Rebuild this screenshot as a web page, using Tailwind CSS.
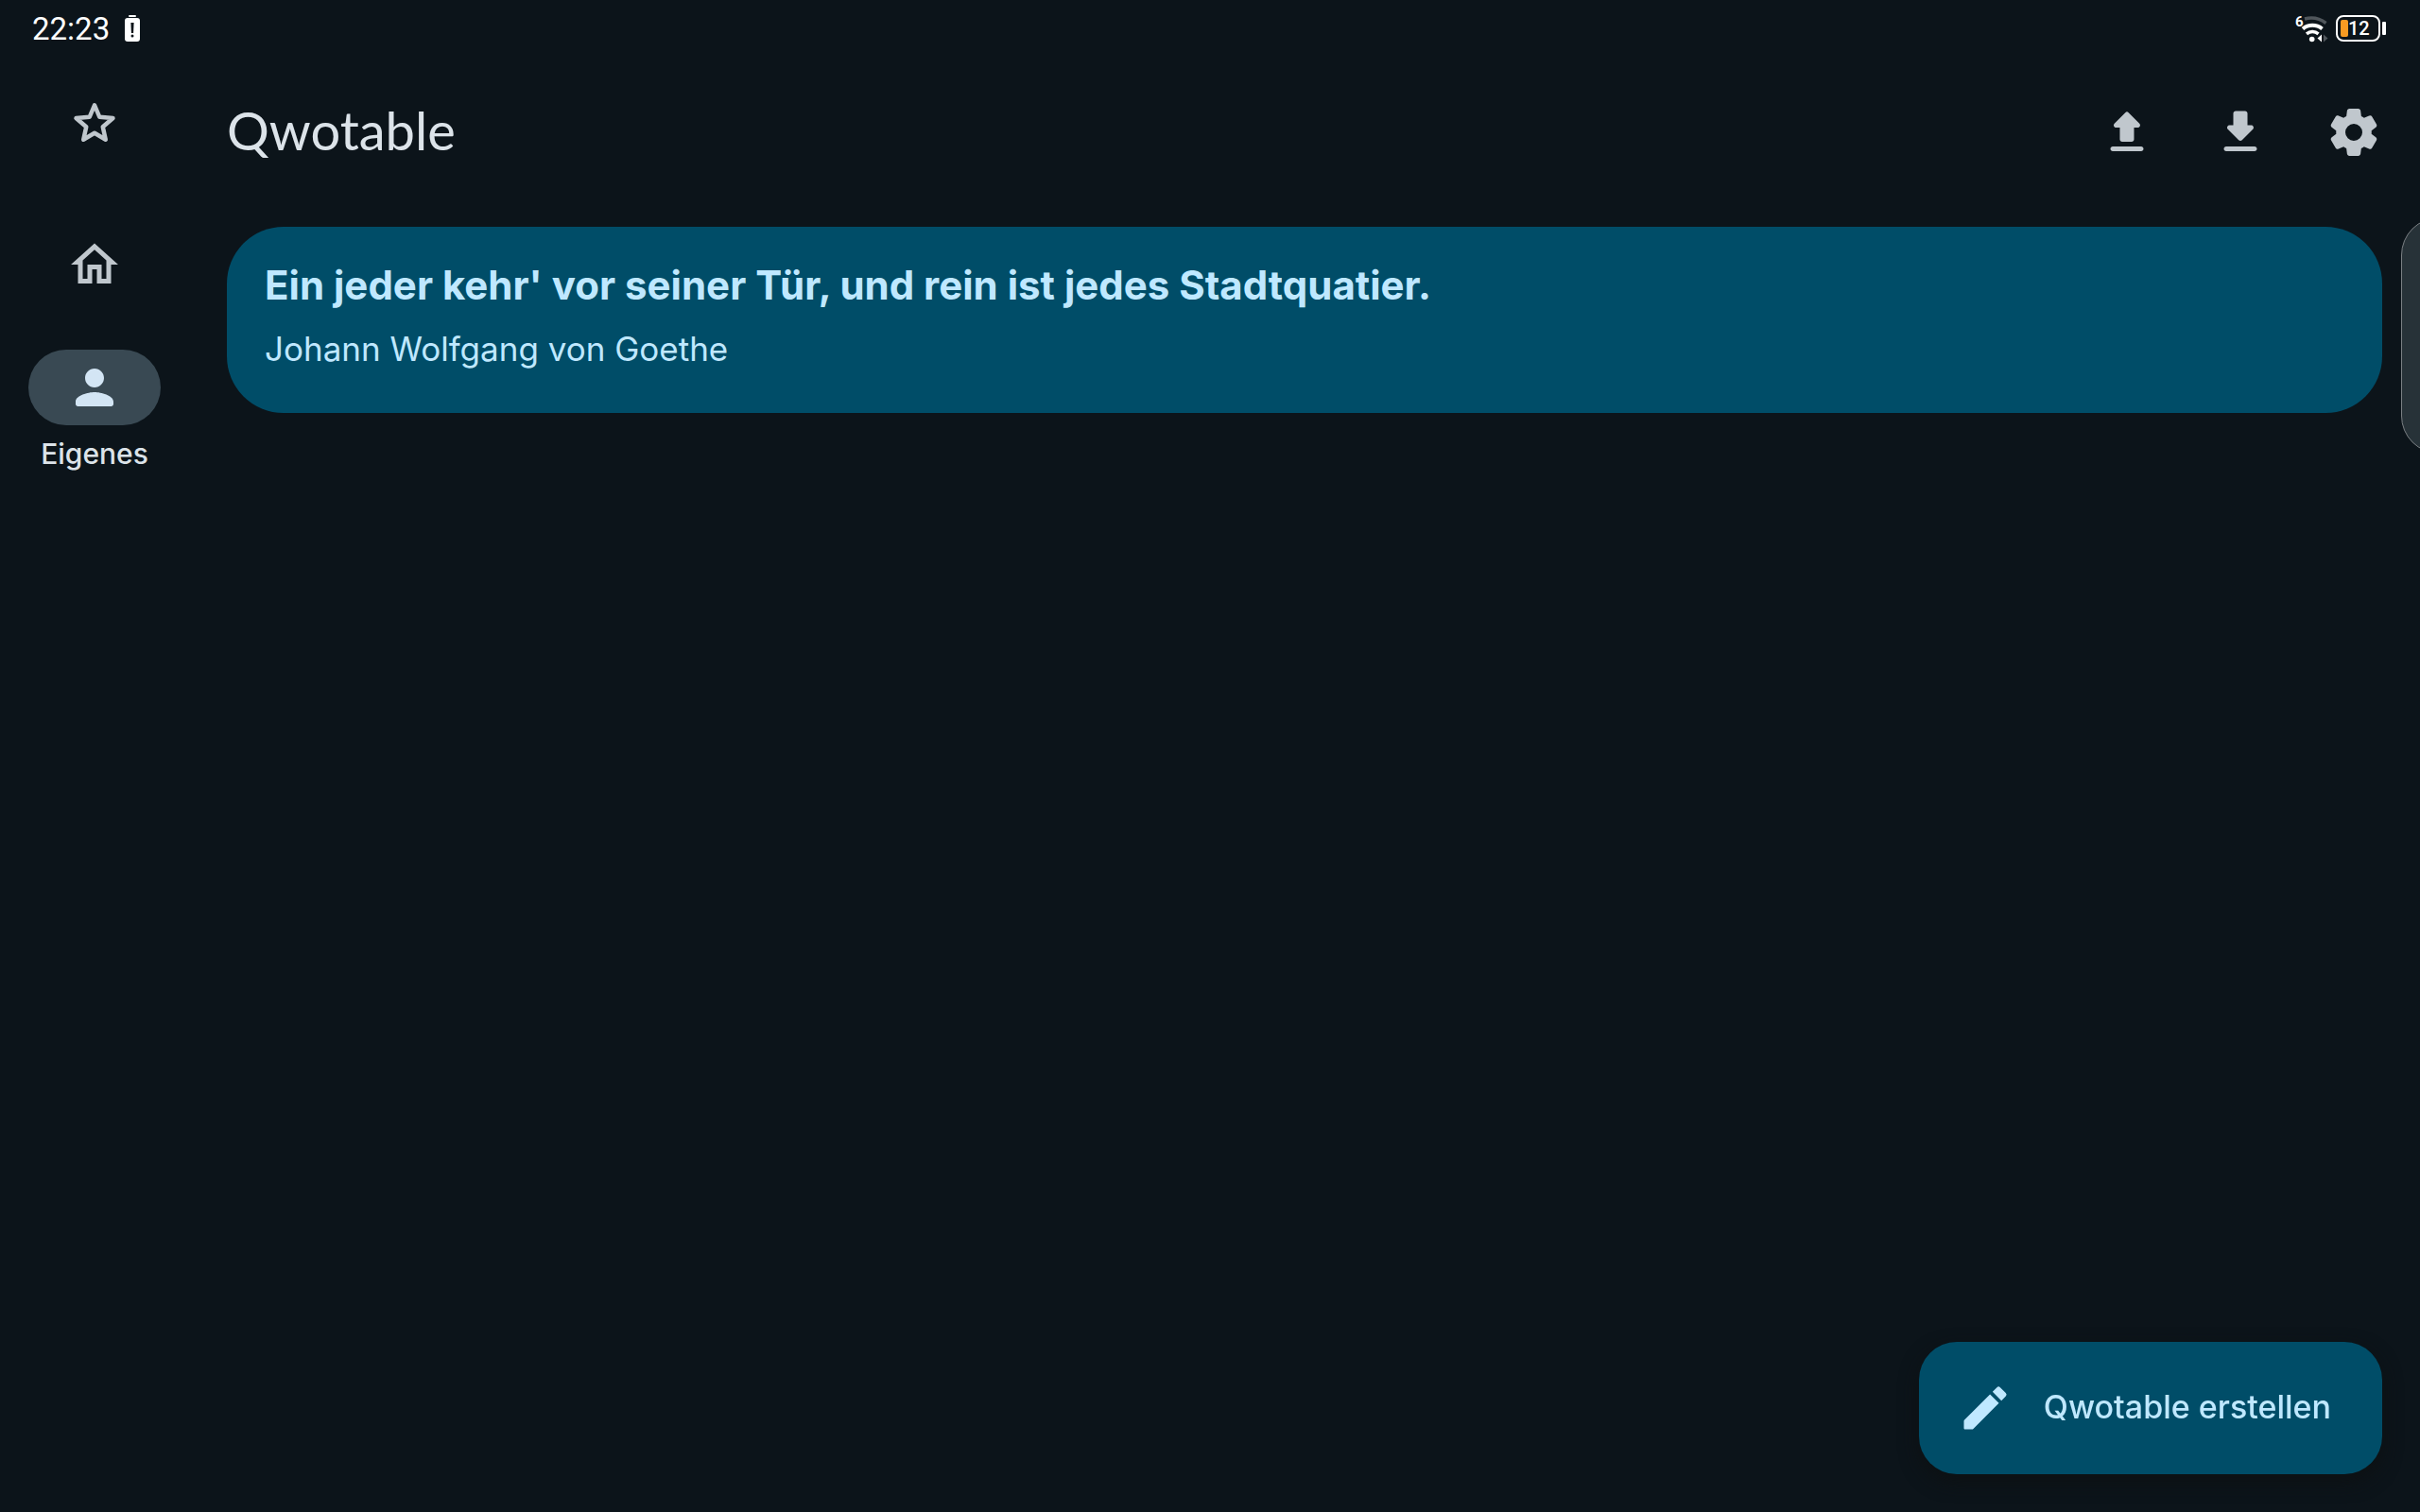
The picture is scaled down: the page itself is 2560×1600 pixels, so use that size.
<!DOCTYPE html>
<html lang="de">
<head>
<meta charset="utf-8">
<meta name="viewport" content="width=device-width, initial-scale=1">
<title>Qwotable</title>
<script src="https://cdn.jsdelivr.net/npm/@tailwindcss/browser@4"></script>
</head>
<body class="relative flex min-h-screen flex-col overflow-x-hidden bg-[#0c141a] font-['Inter',sans-serif] text-[#dce3e9]">
  <!-- Status bar -->
  <header class="flex h-15 items-center justify-between pr-9 pl-[34px] text-white">
    <div class="flex items-center gap-4">
      <time class="pt-[2px] font-['Roboto',sans-serif] text-[33px] leading-10">22:23</time>
      <svg class="h-7 w-4" viewBox="0 0 16 28" role="img" aria-label="Akku schwach">
        <rect x="4" y="0" width="8" height="2" rx="1" fill="#fff"/>
        <rect x="0" y="3" width="16" height="25" rx="3" fill="#fff"/>
        <path d="M6.400 8h3.200l-.5 11H6.900z" fill="#0c141a"/>
        <circle cx="8" cy="22" r="1.500" fill="#0c141a"/>
      </svg>
    </div>
    <div class="flex items-center gap-2">
      <svg class="h-8 w-9 overflow-visible font-['Roboto',sans-serif]" viewBox="0 0 36 32" fill="none" role="img" aria-label="WLAN 6">
        <path d="M11 6A26 26 0 0 1 33.500 10.500" stroke="#50565b" stroke-width="3.500"/>
        <path d="M9 16.500A16 16 0 0 1 29.500 16.500" stroke="#fff" stroke-width="4"/>
        <path d="M13 21.800A10 10 0 0 1 25.500 21.800" stroke="#fff" stroke-width="3.500"/>
        <circle cx="18.700" cy="27.500" r="2.800" fill="#fff"/>
        <path d="M29 22.500v8l-4.500-4z" fill="#fff"/>
        <path d="M31 22.500v8l4.500-4z" fill="#50565b"/>
        <text x="1" y="14" font-size="15" font-weight="700" fill="#fff">6</text>
      </svg>
      <div class="flex items-center gap-[2px]">
        <div class="flex h-7 w-[47px] items-center rounded-lg border-2 border-white pl-[3px]">
          <span class="h-[18px] w-2 rounded-[2px] bg-[#f99b22]"></span>
          <span class="font-['Roboto',sans-serif] text-[20px] leading-6 font-medium">12</span>
        </div>
        <span class="h-[14px] w-1 rounded-[1px] bg-white"></span>
      </div>
    </div>
  </header>

  <div class="flex flex-1">
    <!-- Navigation rail -->
    <nav class="flex w-50 flex-col items-center pt-10 text-[#c0c7cd]" aria-label="Hauptnavigation">
      <a href="#favoriten" aria-label="Favoriten" class="mb-[90px]">
        <svg class="size-15" viewBox="0 0 24 24" fill="none" stroke="currentColor" stroke-width="1.800" stroke-linejoin="round"><path d="M12 4.500 14.100 9.500 19.800 10 15.500 13.700 16.700 19.100 12 16.300 7.300 19.100 8.500 13.700 4.200 10 9.900 9.500z"/></svg>
      </a>
      <a href="#start" aria-label="Start" class="mb-15">
        <svg class="size-15" viewBox="0 0 24 24" fill="currentColor"><path d="M12 5.690l5 4.500V18h-2v-6H9v6H7v-7.810l5-4.500M12 3L2 12h3v8h6v-6h2v6h6v-8h3L12 3z"/></svg>
      </a>
      <a href="#eigenes" aria-current="page" class="flex flex-col items-center gap-[10px]">
        <span class="flex h-20 w-35 items-center justify-center rounded-full bg-[#394953] text-[#d3e5f4]">
          <svg class="size-15" viewBox="0 0 24 24" fill="currentColor"><path d="M12 12c2.210 0 4-1.790 4-4s-1.790-4-4-4-4 1.790-4 4 1.790 4 4 4zm0 2c-2.670 0-8 1.340-8 4v1c0 .55.45 1 1 1h14c.55 0 1-.45 1-1v-1c0-2.660-5.330-4-8-4z"/></svg>
        </span>
        <span class="text-[30px] leading-10 font-medium text-[#dce3e9]">Eigenes</span>
      </a>
    </nav>

    <main class="flex flex-1 flex-col pr-10 pl-10">
      <!-- App bar -->
      <div class="flex h-40 items-center justify-between">
        <h1 class="pb-1 font-['Lato',sans-serif] text-[56px] leading-[70px]">Qwotable</h1>
        <div class="flex gap-15 text-[#c0c7cd]">
          <button type="button" aria-label="Exportieren">
            <svg class="size-15" viewBox="0 0 24 24" fill="currentColor"><path d="M7.400 10h1.590v5c0 .55.45 1 1 1h4c.55 0 1-.45 1-1v-5h1.590c.89 0 1.340-1.080.71-1.710L12.700 3.700a.996.996 0 0 0-1.410 0L6.700 8.290c-.63.63-.19 1.710.7 1.710zM5 19c0 .55.45 1 1 1h12c.55 0 1-.45 1-1s-.45-1-1-1H6c-.55 0-1 .45-1 1z"/></svg>
          </button>
          <button type="button" aria-label="Importieren">
            <svg class="size-15" viewBox="0 0 24 24" fill="currentColor"><path d="M16.590 9H15V4c0-.55-.45-1-1-1h-4c-.55 0-1 .45-1 1v5H7.410c-.89 0-1.340 1.080-.71 1.710l4.590 4.590c.39.39 1.020.39 1.410 0l4.590-4.590c.63-.63.19-1.710-.7-1.710zM5 19c0 .55.45 1 1 1h12c.55 0 1-.45 1-1s-.45-1-1-1H6c-.55 0-1 .45-1 1z"/></svg>
          </button>
          <button type="button" aria-label="Einstellungen">
            <svg class="size-15" viewBox="0 0 24 24" fill="currentColor"><path d="M19.500 12c0-.23-.01-.45-.03-.68l1.860-1.410c.4-.3.51-.86.26-1.300l-1.870-3.230a.987.987 0 0 0-1.250-.42l-2.150.91c-.37-.26-.76-.49-1.170-.68l-.29-2.310c-.06-.5-.49-.88-.99-.88h-3.730c-.51 0-.94.38-1 .88l-.29 2.310c-.41.19-.8.42-1.170.68l-2.150-.91c-.46-.2-1-.02-1.250.42L2.410 8.620c-.25.44-.14.99.26 1.300l1.860 1.410a7.343 7.343 0 0 0 0 1.350l-1.860 1.410c-.4.3-.51.86-.26 1.300l1.870 3.230c.25.44.79.62 1.250.42l2.150-.91c.37.26.76.49 1.170.68l.29 2.310c.06.5.49.88.99.88h3.730c.5 0 .93-.38.99-.88l.29-2.310c.41-.19.8-.42 1.170-.68l2.150.91c.46.2 1 .02 1.250-.42l1.870-3.230c.25-.44.14-.99-.26-1.300l-1.860-1.410c.03-.23.04-.45.04-.68zM12 15.600a3.600 3.600 0 1 1 0-7.200 3.600 3.600 0 0 1 0 7.200z"/></svg>
          </button>
        </div>
      </div>

      <!-- Own quotes -->
      <article class="mt-5 rounded-[60px] bg-[#004d68] px-10 pt-8 pb-[43px] text-[#bfe8ff]">
        <blockquote class="text-[42px] leading-15 font-bold">Ein jeder kehr' vor seiner Tür, und rein ist jedes Stadtquatier.</blockquote>
        <p class="mt-3 text-[35px] leading-[50px]">Johann Wolfgang von Goethe</p>
      </article>
    </main>
  </div>

  <button type="button" class="fixed right-10 bottom-10 flex h-35 items-center gap-8 rounded-[40px] bg-[#004d68] pr-[54px] pl-10 text-[#bfe8ff] shadow-[0_8px_20px_#0d1113]">
    <svg class="size-15" viewBox="0 0 24 24" fill="currentColor"><path d="M3 17.460v3.040c0 .28.22.5.5.5h3.040c.13 0 .26-.05.35-.15L17.810 9.940l-3.750-3.750L3.150 17.100c-.1.1-.15.22-.15.36zM20.710 7.040a.996.996 0 0 0 0-1.410l-2.340-2.340a.996.996 0 0 0-1.410 0l-1.830 1.830 3.750 3.750 1.830-1.830z"/></svg>
    <span class="pb-[2px] text-[34px] leading-[50px] font-medium">Qwotable erstellen</span>
  </button>

  <!-- Edge panel handle peeking in from the right -->
  <aside class="absolute top-[230px] right-0 h-[250px] w-5 overflow-hidden" aria-hidden="true">
    <div class="h-full w-20 rounded-[40px] border border-[#7b8084] bg-[#273238]"></div>
  </aside>
</body>
</html>
